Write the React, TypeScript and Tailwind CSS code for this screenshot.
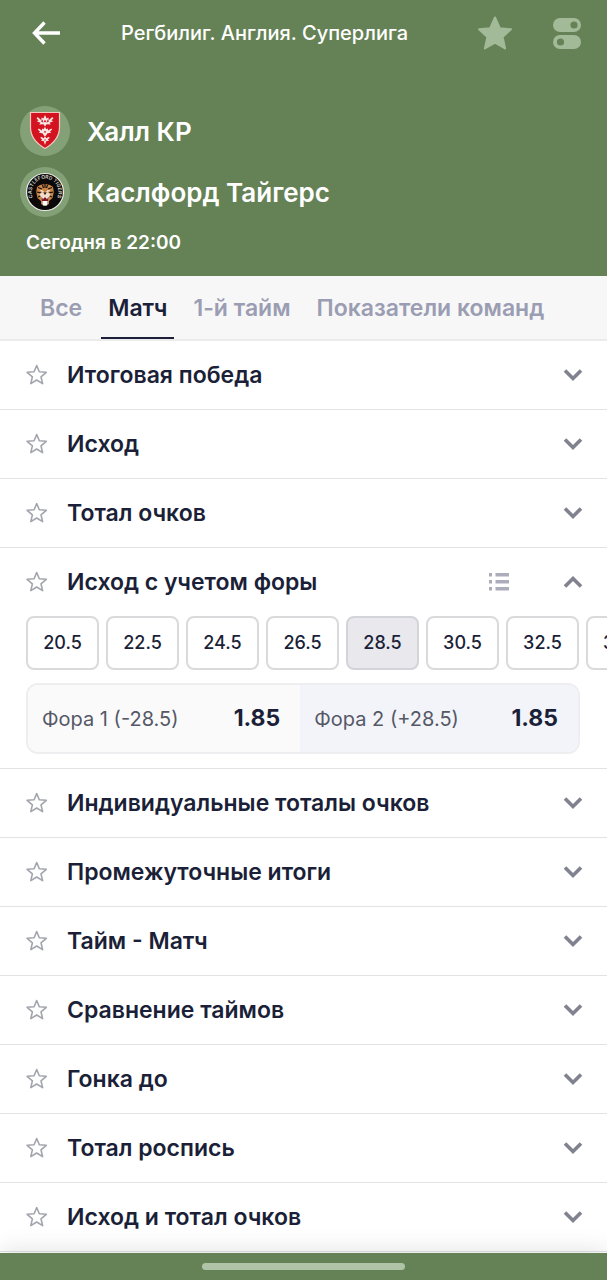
import { useState } from 'react';

const tabs = ['Все', 'Матч', '1-й тайм', 'Показатели команд'];

const handicaps = ['20.5', '22.5', '24.5', '26.5', '28.5', '30.5', '32.5', '34.5'];

const markets = [
  'Итоговая победа',
  'Исход',
  'Тотал очков',
  'Исход с учетом форы',
  'Индивидуальные тоталы очков',
  'Промежуточные итоги',
  'Тайм - Матч',
  'Сравнение таймов',
  'Гонка до',
  'Тотал роспись',
  'Исход и тотал очков',
];

const HANDICAP_MARKET = 'Исход с учетом форы';

function StarOutline() {
  return (
    <svg width="22" height="22" viewBox="0 0 22 22" fill="none" stroke="#a3a5ad" strokeWidth="1.6" strokeLinejoin="round">
      <path d="M10.700 1.500l2.600 6.200 7 .6-5.300 4.500 1.600 6.800-5.900-3.600-5.900 3.600 1.600-6.800L1.100 8.300l7-.6z" />
    </svg>
  );
}

function Chevron({ up }: { up?: boolean }) {
  return (
    <svg width="20" height="14" viewBox="0 0 20 14" fill="none" stroke="#80828f" strokeWidth="3.6" className={up ? 'rotate-180' : ''}>
      <path d="M2 2.500l8 8 8-8" />
    </svg>
  );
}

function HullCrest() {
  return (
    <svg width="50" height="50" viewBox="0 0 50 50">
      <circle cx="25" cy="25" r="25" fill="#84a077" />
      <path d="M10.500 6.500h29v15c0 9-6 16-14.500 21C16.500 37.500 10.500 30.500 10.500 21.500z" fill="#d31420" stroke="#f0c9bf" strokeWidth="1.200" />
      <g fill="#f7e6e3">
        <path d="M25 9l1.600 3.500 1.800-1 .3 2.800 3.600-3.300 1.200 1.600-2.200 1.700 2 .9-3.800 1.600 1.300 1.800-4.300-.3L25 20.500l-1.500-2.200-4.300.3 1.300-1.800-3.800-1.600 2-.9-2.200-1.700 1.200-1.600 3.600 3.300.3-2.800 1.800 1z" />
        <path d="M25 20.800l1.300 2.400 1.700-.8v2l3.300-2 .8 1.400-2.200 1.800 1.400.9-4.100 1-.7 1.600L25 30.500l-1.500-1.400-.7-1.600-4.100-1 1.400-.9-2.200-1.800.8-1.400 3.300 2v-2l1.700.8z" />
        <path d="M25 30.200l1.200 2 2.800-1.500.6 1.300-1.800 1.600 1.300.8-2.900.9L25 39l-1.200-3.700-2.900-.9 1.300-.8-1.800-1.600.6-1.300 2.800 1.500z" />
      </g>
      <g fill="#d31420">
        <path d="M22.300 13.500l1.200 3.200-2.600-1.400zM27.700 13.500l-1.200 3.200 2.600-1.400z" />
        <circle cx="25" cy="15.200" r="1" />
        <circle cx="25" cy="25.800" r=".9" />
        <circle cx="25" cy="34" r=".7" />
      </g>
    </svg>
  );
}

function TigersCrest() {
  return (
    <svg width="50" height="50" viewBox="0 0 50 50">
      <circle cx="25" cy="25" r="25" fill="#84a077" />
      <circle cx="25" cy="25" r="18.500" fill="#0b0909" stroke="#e8ebe2" strokeWidth="1.200" />
      <path id="crest-arc" d="M13.400 31.500A13.300 13.300 0 1 1 36.600 31.500" fill="none" />
      <text fill="#d6d3cd" fontSize="5" fontWeight="600" fontFamily="Inter, sans-serif">
        <textPath href="#crest-arc" startOffset="50%" textAnchor="middle">CASTLEFORD TIGERS</textPath>
      </text>
      <path d="M17 20l3-2 5-1 5 1 3 2 .8 5-1.300 6-3.500 3v3l-4 2-4-2v-3l-3.500-3-1.300-6z" fill="#c98448" />
      <path d="M18 20.500l4 1.500M32 20.500L28 22M16.800 25l4 .8M33.200 25l-4 .8M18 30l3.500-1.500M32 30l-3.500-1.500M25 17v4M22.500 18l1 3M27.500 18l-1 3" stroke="#19100d" strokeWidth="1.200" />
      <path d="M19.500 27l3.500-2 2 1.500 2-1.500 3.500 2-2 4.500h-7z" fill="#f0ddca" />
      <path d="M20.500 23.500l3 1M29.500 23.500l-3 1" stroke="#fff" strokeWidth="1.300" />
      <path d="M23.300 25.500h3.400L25 28z" fill="#2b1713" />
      <path d="M21.500 30h7l-.8 6h-5.400z" fill="#7c1518" />
      <path d="M22 30l1 2.500 1-2h2l1 2 1-2.500zM22.300 34h5.400l-.6 4.500h-4.200z" fill="#fff" />
    </svg>
  );
}

function HandicapPanel() {
  const [active, setActive] = useState('28.5');

  return (
    <div className="pb-[14px]">
      <div className="flex gap-[7px] overflow-x-auto pl-[26px] [scrollbar-width:none]">
        {handicaps.map((value) => (
          <button
            key={value}
            onClick={() => setActive(value)}
            className={`h-[54px] w-[73px] shrink-0 rounded-lg border-2 text-lg font-medium ${
              value === active ? 'border-[#d3d4d9] bg-[#e8e8ed]' : 'border-[#dadadc] bg-white'
            }`}
          >
            {value}
          </button>
        ))}
      </div>

      <div className="mt-[13px] mr-[27px] ml-[26px] flex h-[71px] overflow-hidden rounded-xl border-2 border-[#eeeef1]">
        <button className="flex w-[49.5%] items-center justify-between bg-[#fafafb] pr-5 pl-[14px]">
          <span className="text-[20px] text-[#555866]">Фора 1 (-28.5)</span>
          <span className="text-[23px] font-bold">1.85</span>
        </button>
        <button className="flex flex-1 items-center justify-between bg-[#f3f4f9] pr-5 pl-[14px]">
          <span className="text-[20px] text-[#555866]">Фора 2 (+28.5)</span>
          <span className="text-[23px] font-bold">1.85</span>
        </button>
      </div>
    </div>
  );
}

function App() {
  const [activeTab, setActiveTab] = useState('Матч');
  const [openMarket, setOpenMarket] = useState<string | null>(HANDICAP_MARKET);

  const toggleMarket = (name: string) => {
    setOpenMarket(openMarket === name ? null : name);
  };

  return (
    <div className="flex min-h-screen flex-col overflow-x-hidden bg-white font-['Inter','Noto_Sans',sans-serif] text-[#1b1f38]">
      {/* HEADER */}
      <header className="bg-[#658256] text-white">
        <div className="flex h-[66px] items-center pr-[26px] pl-8">
          <button aria-label="Назад">
            <svg width="29" height="24" viewBox="0 0 29 24" fill="none" stroke="#fff" strokeWidth="3.4">
              <path d="M12.500 1.500L2.500 12l10 10.500M2.500 12H28" />
            </svg>
          </button>
          <h1 className="ml-[60px] flex-1 text-[20px] font-medium whitespace-nowrap">Регбилиг. Англия. Суперлига</h1>
          <button aria-label="В избранное">
            <svg width="36" height="36" viewBox="0 0 36 36" fill="#a3ba99" stroke="#a3ba99" strokeWidth="2" strokeLinejoin="round">
              <path d="M18 2.500l4.800 10.700 11.200 1.100-8.400 7.600 2.500 11.600L18 27.600 7.900 33.500l2.500-11.600L2 14.300l11.200-1.100z" />
            </svg>
          </button>
          <button aria-label="Настройки" className="ml-10">
            <svg width="28" height="32" viewBox="0 0 28 32">
              <rect width="28" height="14" y="1" rx="7" fill="#a3ba99" />
              <rect width="28" height="14" y="18" rx="7" fill="#a3ba99" />
              <circle cx="21" cy="8" r="3.600" fill="#658256" />
              <circle cx="7.500" cy="25" r="3.600" fill="#658256" />
            </svg>
          </button>
        </div>

        <div className="flex flex-col gap-[11px] px-5 pt-10">
          <div className="flex items-center gap-[17px]">
            <HullCrest />
            <h2 className="text-[26px] font-semibold">Халл КР</h2>
          </div>
          <div className="flex items-center gap-[17px]">
            <TigersCrest />
            <h2 className="text-[26px] font-semibold">Каслфорд Тайгерс</h2>
          </div>
        </div>
        <p className="px-[26px] pt-3 pb-[19px] text-[19px]/7 font-semibold">Сегодня в 22:00</p>
      </header>

      {/* TABS */}
      <nav className="flex h-[65px] shrink-0 border-b-2 border-[#ebebed] bg-[#f7f7f8] px-[33px]">
        {tabs.map((tab) => (
          <button
            key={tab}
            onClick={() => setActiveTab(tab)}
            className={`mr-3 border-b-2 px-[7px] pt-1 text-[23px] font-semibold whitespace-nowrap ${
              tab === activeTab ? 'border-[#1b1f38]' : 'border-transparent text-[#9b9db3]'
            }`}
          >
            {tab}
          </button>
        ))}
      </nav>

      {/* MARKETS */}
      <main>
        {markets.map((name) => {
          const isOpen = openMarket === name;
          return (
            <section key={name} className="border-b border-[#e3e3e6]">
              <div className="flex h-[68px] items-center pr-6 pl-[26px]">
                <button aria-label={`В избранное: ${name}`}>
                  <StarOutline />
                </button>
                <button
                  onClick={() => toggleMarket(name)}
                  aria-expanded={isOpen}
                  className="flex h-full flex-1 items-center pl-[19px]"
                >
                  <span className="flex-1 text-left text-[23px] font-semibold">{name}</span>
                  {isOpen && (
                    <svg width="22" height="18" viewBox="0 0 22 18" fill="#abadbb" className="mr-[53px]">
                      <path d="M1 0h3v3.500H1zM7.500 0H21v3.500H7.500zM1 7h3v3.500H1zM7.500 7H21v3.500H7.500zM1 14h3v3.500H1zM7.500 14H21v3.500H7.500z" />
                    </svg>
                  )}
                  <Chevron up={isOpen} />
                </button>
              </div>
              {isOpen && name === HANDICAP_MARKET && <HandicapPanel />}
            </section>
          );
        })}
      </main>

      {/* BOTTOM BAR */}
      <footer className="relative mt-auto flex h-[27px] items-center justify-center bg-[#658256] shadow-[0_-2px_24px_rgba(0,0,0,0.12)]">
        <div className="h-[7px] w-1/3 rounded-full bg-[#afc4a6]"></div>
      </footer>
    </div>
  );
}

export default App;
